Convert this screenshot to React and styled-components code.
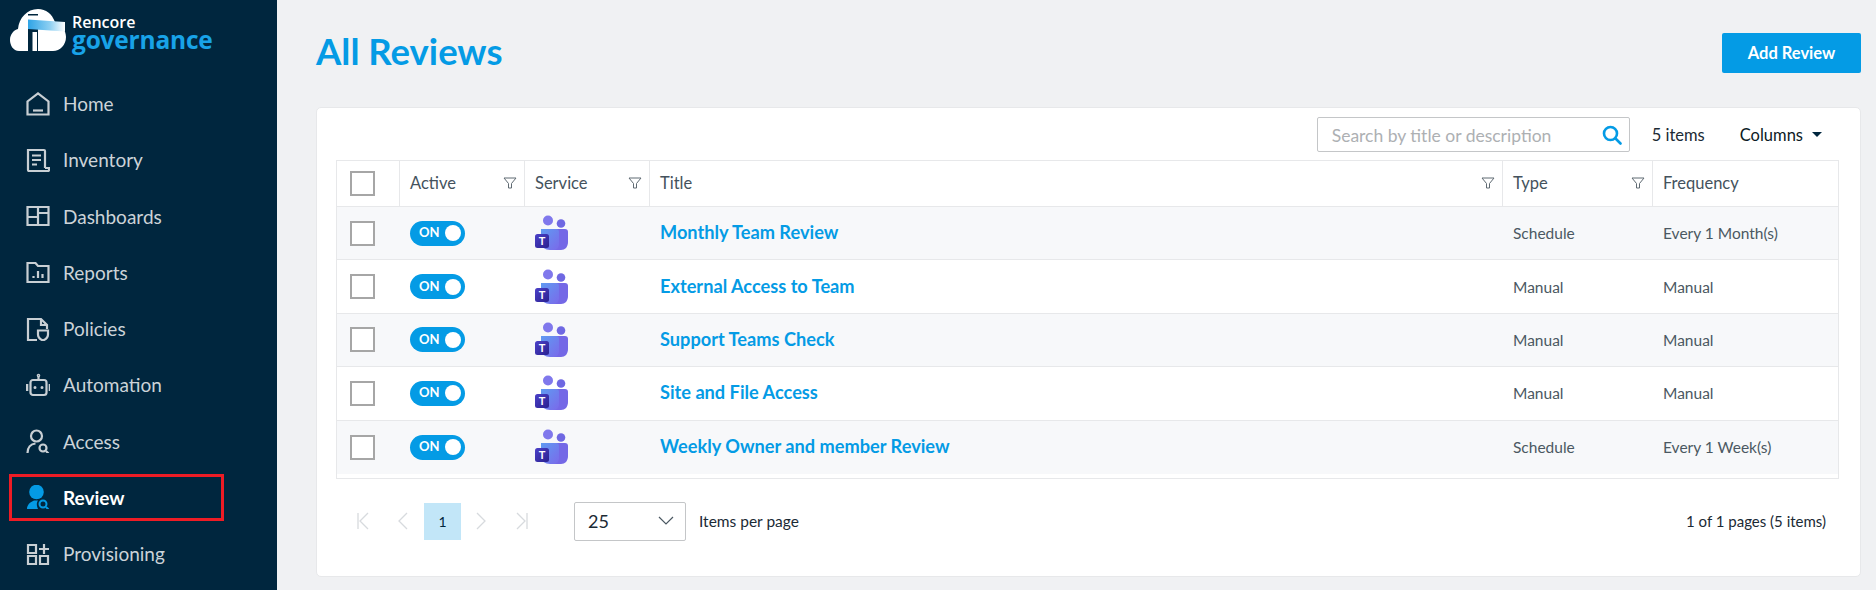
import React from "react";
import styled, { createGlobalStyle } from "styled-components";

const FONT = `Lato, "Noto Sans", sans-serif`;
const BLUE = "#049be5";

const GlobalStyle = createGlobalStyle`
  html, body { margin: 0; padding: 0; height: 100%; overflow: hidden; }
  body { font-family: ${FONT}; background: #f0f1f3; }
  * { box-sizing: border-box; }
`;

const Page = styled.div`
  display: flex;
  width: 1876px;
  height: 590px;
  overflow: hidden;
`;

const Sidebar = styled.aside`
  flex: 0 0 277px;
  background: #00263e;
  display: flex;
  flex-direction: column;
`;

const LogoRow = styled.div`
  height: 75.5px;
  flex: none;
  display: flex;
  align-items: flex-start;
  padding: 8px 0 0 10px;
`;

const LogoText = styled.div`
  margin: 6px 0 0 6px;
  display: flex;
  flex-direction: column;
`;

const LogoTop = styled.span`
  color: #fff;
  font: 600 16px/16px "Open Sans", sans-serif;
`;

const LogoBottom = styled.span`
  color: #18a3e8;
  font: 700 24.500px/20px "Open Sans", sans-serif;
  letter-spacing: -0.2px;
`;

const NavItem = styled.a`
  position: relative;
  height: 56.25px;
  flex: none;
  display: flex;
  align-items: center;
  gap: 13px;
  padding-left: 26px;
  font-size: 19px;
  font-weight: ${p => (p.$active ? 700 : 400)};
  color: ${p => (p.$active ? "#fff" : "#ccd3d8")};
`;

const Marker = styled.span`
  position: absolute;
  left: 9px;
  top: 5px;
  width: 215px;
  height: 47px;
  border: 3px solid #ee1c25;
`;

const Main = styled.main`
  flex: 1;
  padding: 0 15px 0 39px;
  display: flex;
  flex-direction: column;
`;

const Header = styled.header`
  height: 107px;
  flex: none;
  display: flex;
  align-items: center;
  justify-content: space-between;
`;

const Title = styled.h1`
  margin: 0 0 5px;
  color: ${BLUE};
  font-size: 36.500px;
  font-weight: 700;
`;

const AddButton = styled.button`
  width: 139px;
  height: 40px;
  margin-bottom: 1px;
  border: none;
  border-radius: 2px;
  background: ${BLUE};
  color: #fff;
  font: 700 16.500px ${FONT};
`;

const Card = styled.section`
  height: 470px;
  background: #fff;
  border: 1px solid #e7e8ea;
  border-radius: 5px;
  padding: 9px 21px 0 19px;
`;

const Toolbar = styled.div`
  height: 35px;
  display: flex;
  align-items: center;
  justify-content: flex-end;
  padding-right: 17px;
`;

const SearchBox = styled.div`
  width: 313px;
  height: 35px;
  border: 1px solid #c4c6c8;
  border-radius: 2px;
  display: flex;
  align-items: center;
  justify-content: space-between;
  padding: 1px 7px 0 14px;
  font-size: 17.500px;
  color: #adb0b3;
`;

const ItemCount = styled.span`
  margin-left: 22px;
  font-size: 16.500px;
  color: #1b2a35;
`;

const ColumnsMenu = styled.span`
  margin-left: 35px;
  display: flex;
  align-items: center;
  gap: 9px;
  font-size: 16.500px;
  color: #0c1a24;
`;

const Caret = styled.span`
  border-left: 5px solid transparent;
  border-right: 5px solid transparent;
  border-top: 5px solid #00263e;
`;

const Table = styled.div`
  margin-top: 8px;
  height: 319px;
  border: 1px solid #e7e8ea;
`;

const Row = styled.div`
  display: grid;
  grid-template-columns: 63px 125px 125px 853px 150px 1fr;
  height: ${p => (p.$head ? "46px" : "53.4px")};
  background: ${p => (p.$shaded ? "#f7f8fa" : "#fff")};
  border-bottom: ${p => (p.$last ? "none" : "1px solid #e7e8ea")};
`;

const HeadCell = styled.div`
  display: flex;
  align-items: center;
  justify-content: space-between;
  padding: 0 7px 2px 10px;
  font-size: 16.500px;
  color: #44525d;
  border-right: ${p => (p.$end ? "none" : "1px solid #e7e8ea")};
`;

const HeadCheckCell = styled(HeadCell)`
  padding: 0 0 0 13px;
`;

const Cell = styled.div`
  display: flex;
  align-items: center;
  padding-left: 10px;
  font-size: 15.500px;
  color: #4b5862;
`;

const CheckCell = styled(Cell)`
  padding-left: 13px;
`;

const Check = styled.span`
  width: 25px;
  height: 25px;
  border: 2px solid #a6a6a6;
  background: #fff;
`;

const Toggle = styled.span`
  width: 55px;
  height: 25px;
  border-radius: 13px;
  background: ${BLUE};
  display: flex;
  align-items: center;
  justify-content: space-between;
  padding: 0 4px 2px 9px;
  color: #fff;
  font-size: 13px;
  font-weight: 700;
`;

const Knob = styled.span`
  width: 16px;
  height: 16px;
  margin-top: 2px;
  border-radius: 50%;
  background: #fff;
`;

const TitleLink = styled.a`
  color: ${BLUE};
  font-size: 18.200px;
  font-weight: 700;
  margin-top: -2px;
`;

const Pager = styled.div`
  margin-top: 22px;
  display: flex;
  align-items: center;
  height: 40px;
  padding-right: 13px;
`;

const PagerIcon = styled.span`
  width: ${p => p.$w}px;
  margin-left: ${p => p.$offset || 0}px;
  display: flex;
  justify-content: center;
`;

const PageNumber = styled.span`
  width: 37px;
  height: 37px;
  background: #c2e6f8;
  color: #00263e;
  font-size: 14px;
  display: flex;
  align-items: center;
  justify-content: center;
`;

const PageSelect = styled.div`
  margin-left: 31px;
  width: 112px;
  height: 39px;
  border: 1px solid #c4c6c8;
  border-radius: 2px;
  display: flex;
  align-items: center;
  justify-content: space-between;
  padding: 0 11px 0 13px;
  font-size: 18px;
  color: #1b2a35;
`;

const PerPage = styled.span`
  margin-left: 13px;
  font-size: 15.500px;
  color: #1b2a35;
`;

const PageSummary = styled.span`
  margin-left: auto;
  font-size: 15px;
  color: #1b2a35;
`;

const Logo = () => (
  <svg width="56" height="44" viewBox="0 0 56 44">
    <defs>
      <linearGradient id="beam" x1="0" x2="1">
        <stop offset="0" stopColor="#2fa4e6" />
        <stop offset="0.6" stopColor="#8fd0f2" />
        <stop offset="1" stopColor="#ffffff" />
      </linearGradient>
    </defs>
    <path fill="#fff" d="M9 43C3 43 0 37 0 32c0-6 4-10 8-11C9 10 17 1 28 1c8 0 14 5 17 13 6 2 11 8 11 15 0 8-6 14-13 14H9z" />
    <path fill="#00263e" d="M18 6h10v1.500H18zM18 21h10v3H18zM18 24h4.500v19H18zM27 24h1v19h-1z" />
    <path fill="url(#beam)" d="M18 11.500l37 2.500v9.500L18 21z" />
  </svg>
);

const Stroke = ({ children, color = "#c8cfd4" }) => (
  <svg width="24" height="24" viewBox="0 0 24 24" fill="none" stroke={color} strokeWidth="2.200">
    {children}
  </svg>
);

const icons = {
  home: (
    <Stroke>
      <path d="M1.500 22.500V9.500L12 1.500l10.500 8v13z" />
      <path d="M7 18.500h10" />
    </Stroke>
  ),
  inventory: (
    <Stroke>
      <path d="M19 20V3a1 1 0 0 0-1-1H2v20a1 1 0 0 0 1 1h19a1 1 0 0 0 1-1v-2h-4" />
      <path d="M6 7.500h9M6 12h9M6 16.500h5" />
    </Stroke>
  ),
  dashboards: (
    <Stroke>
      <path d="M1.500 3h21v18h-21zM12 3v18M1.500 13h10.500M12 9h10.500" />
    </Stroke>
  ),
  reports: (
    <Stroke>
      <path d="M1.500 3h8l2.500 3h10.500v16h-21z" />
      <path d="M7.500 18v-2M12 18v-7M16.500 18v-4" />
    </Stroke>
  ),
  policies: (
    <Stroke>
      <path d="M11 23H2V2h13l6 6v4" />
      <path d="M15 2v6h6" />
      <path d="M12 13.500h10v4c0 3-2.500 5-5 6-2.500-1-5-3-5-6z" />
    </Stroke>
  ),
  automation: (
    <Stroke>
      <rect x="4.500" y="7" width="16" height="15" rx="2.500" />
      <path d="M12.500 7V3" />
      <circle cx="12.500" cy="2.500" r="0.700" />
      <path d="M1 11v7M24 11v7" strokeWidth="2.600" />
      <path d="M9 14.500h.01M16 14.500h.01" strokeWidth="3" strokeLinecap="round" />
    </Stroke>
  ),
  access: (
    <Stroke>
      <circle cx="10.500" cy="7" r="5.500" />
      <path d="M1.500 24c0-5 3-9 8-9.500" />
      <circle cx="17" cy="19" r="3.500" />
      <path d="M20 22l2.500 2.500" />
    </Stroke>
  ),
  review: (
    <svg width="24" height="24" viewBox="0 0 24 24" fill={BLUE}>
      <circle cx="10.500" cy="7" r="7.300" />
      <path d="M1 24c0-4 3-7 7-8.500h4c-2 3-1 6 0 8.500z" />
      <circle cx="17" cy="19" r="3.500" fill="none" stroke={BLUE} strokeWidth="2" />
      <path d="M20 22l2.500 2.500" stroke={BLUE} strokeWidth="2" />
    </svg>
  ),
  provisioning: (
    <Stroke>
      <path d="M2 3h8v8H2zM2 14h8v8H2zM14 14h8v8h-8z" />
      <path d="M18 2v10M13 7h10" />
    </Stroke>
  ),
};

const navItems = [
  ["Home", "home"],
  ["Inventory", "inventory"],
  ["Dashboards", "dashboards"],
  ["Reports", "reports"],
  ["Policies", "policies"],
  ["Automation", "automation"],
  ["Access", "access"],
  ["Review", "review", true],
  ["Provisioning", "provisioning"],
];

const Filter = () => (
  <svg width="14" height="14" viewBox="0 0 14 14" fill="none" stroke="#5f6a72" strokeWidth="1">
    <path d="M1 2h12L8.500 7.500V12h-3V7.500z" />
  </svg>
);

const SearchIcon = () => (
  <svg width="20" height="20" viewBox="0 0 20 20" fill="none" stroke={BLUE} strokeWidth="2.600">
    <circle cx="8.500" cy="8.500" r="6.500" />
    <path d="M13.500 13.500L18.500 18.500" strokeLinecap="round" />
  </svg>
);

const TeamsIcon = ({ id }) => (
  <svg width="33" height="36" viewBox="0 0 33 36">
    <defs>
      <linearGradient id={`tm${id}`} x1="0" y1="0" x2="1" y2="1">
        <stop offset="0" stopColor="#5f9bf2" />
        <stop offset="1" stopColor="#7a6aea" />
      </linearGradient>
      <linearGradient id={`tb${id}`} x1="0" y1="0" x2="1" y2="1">
        <stop offset="0" stopColor="#4c41c8" />
        <stop offset="1" stopColor="#2a2190" />
      </linearGradient>
    </defs>
    <circle cx="13" cy="5.500" r="5" fill="#8078ec" />
    <circle cx="26" cy="8.500" r="4.300" fill="#6f68e2" />
    <path fill="#7468e6" d="M19 14h11a3 3 0 0 1 3 3v10c0 5-3 8-7 8h-7z" />
    <path fill={`url(#tm${id})`} d="M6 14h15a3 3 0 0 1 3 3v12c0 3-2 6-5 6h-4c-5 0-9-3-9-8z" />
    <rect x="0" y="19" width="14" height="14" rx="2.500" fill={`url(#tb${id})`} />
    <text x="7" y="30" textAnchor="middle" fontSize="11" fontWeight="700" fill="#fff" fontFamily="Lato, sans-serif">T</text>
  </svg>
);

const PagerGlyph = ({ d }) => (
  <svg width="16" height="18" viewBox="0 0 16 18" fill="none" stroke="#d7dade" strokeWidth="1.300">
    <path d={d} />
  </svg>
);

const reviews = [
  ["Monthly Team Review", "Schedule", "Every 1 Month(s)"],
  ["External Access to Team", "Manual", "Manual"],
  ["Support Teams Check", "Manual", "Manual"],
  ["Site and File Access", "Manual", "Manual"],
  ["Weekly Owner and member Review", "Schedule", "Every 1 Week(s)"],
];

export default function App() {
  return (
    <Page>
      <GlobalStyle />
      <Sidebar>
        <LogoRow>
          <Logo />
          <LogoText>
            <LogoTop>Rencore</LogoTop>
            <LogoBottom>governance</LogoBottom>
          </LogoText>
        </LogoRow>
        {navItems.map(([label, icon, active]) => (
          <NavItem key={label} $active={active}>
            {icons[icon]}
            {label}
            {active && <Marker />}
          </NavItem>
        ))}
      </Sidebar>
      <Main>
        <Header>
          <Title>All Reviews</Title>
          <AddButton>Add Review</AddButton>
        </Header>
        <Card>
          <Toolbar>
            <SearchBox>
              Search by title or description
              <SearchIcon />
            </SearchBox>
            <ItemCount>5 items</ItemCount>
            <ColumnsMenu>
              Columns
              <Caret />
            </ColumnsMenu>
          </Toolbar>
          <Table>
            <Row $head>
              <HeadCheckCell>
                <Check />
              </HeadCheckCell>
              <HeadCell>
                Active
                <Filter />
              </HeadCell>
              <HeadCell>
                Service
                <Filter />
              </HeadCell>
              <HeadCell>
                Title
                <Filter />
              </HeadCell>
              <HeadCell>
                Type
                <Filter />
              </HeadCell>
              <HeadCell $end>Frequency</HeadCell>
            </Row>
            {reviews.map(([title, type, frequency], i) => (
              <Row key={title} $shaded={i % 2 === 0} $last={i === reviews.length - 1}>
                <CheckCell>
                  <Check />
                </CheckCell>
                <Cell>
                  <Toggle>
                    ON
                    <Knob />
                  </Toggle>
                </Cell>
                <Cell>
                  <TeamsIcon id={i} />
                </Cell>
                <Cell>
                  <TitleLink>{title}</TitleLink>
                </Cell>
                <Cell>{type}</Cell>
                <Cell>{frequency}</Cell>
              </Row>
            ))}
          </Table>
          <Pager>
            <PagerIcon $w={38} $offset={8}>
              <PagerGlyph d="M3 1v16M13 1L5 9l8 8" />
            </PagerIcon>
            <PagerIcon $w={42}>
              <PagerGlyph d="M12 1L4 9l8 8" />
            </PagerIcon>
            <PageNumber>1</PageNumber>
            <PagerIcon $w={40}>
              <PagerGlyph d="M4 1l8 8-8 8" />
            </PagerIcon>
            <PagerIcon $w={42}>
              <PagerGlyph d="M13 1v16M3 1l8 8-8 8" />
            </PagerIcon>
            <PageSelect>
              25
              <svg width="16" height="10" viewBox="0 0 16 10" fill="none" stroke="#4b5862" strokeWidth="1.200">
                <path d="M1 1l7 7 7-7" />
              </svg>
            </PageSelect>
            <PerPage>Items per page</PerPage>
            <PageSummary>1 of 1 pages (5 items)</PageSummary>
          </Pager>
        </Card>
      </Main>
    </Page>
  );
}
